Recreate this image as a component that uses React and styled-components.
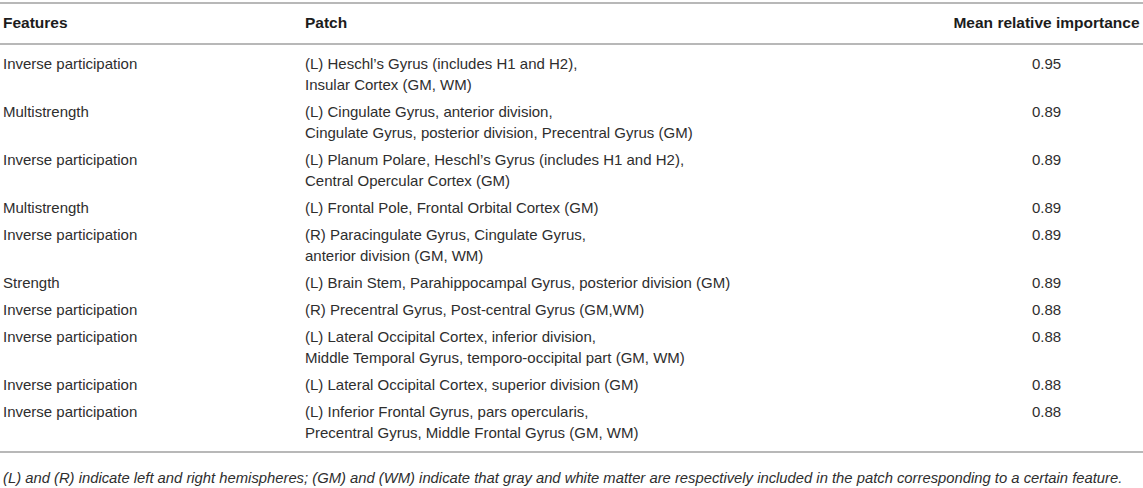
import React from 'react';
import styled, { createGlobalStyle } from 'styled-components';

const GlobalStyle = createGlobalStyle`
  html, body {
    margin: 0;
    padding: 0;
    background: #ffffff;
  }
  body {
    font-family: "Liberation Sans", Arial, Helvetica, sans-serif;
    color: #2e2e2e;
  }
`;

const Wrapper = styled.div`
  width: 1143px;
  padding-top: 2px;
`;

const Table = styled.table`
  width: 100%;
  border-collapse: collapse;
  border-top: 2px solid #b8b8b8;
  border-bottom: 2px solid #b8b8b8;
  font-size: 15px;
  line-height: 21px;
`;

const HeadCell = styled.th`
  font-size: 15.5px;
  font-weight: bold;
  color: #1c1c1c;
  text-align: ${(props) => props.align || 'left'};
  padding: 8px 0 10px ${(props) => props.pl || '3px'};
  border-bottom: 2px solid #b8b8b8;
  width: ${(props) => props.w || 'auto'};
  white-space: nowrap;
`;

const Row = styled.tr`
  &:first-child td {
    padding-top: 8px;
  }
  &:last-child td {
    padding-bottom: 8px;
  }
`;

const Cell = styled.td`
  vertical-align: top;
  text-align: ${(props) => props.align || 'left'};
  padding: 3px 0 3px ${(props) => props.pl || '3px'};
  white-space: nowrap;
`;

const Note = styled.p`
  margin: 16px 0 0 3px;
  font-size: 14.8px;
  font-style: italic;
  color: #2e2e2e;
  line-height: 18px;
  white-space: nowrap;
`;

const rows = [
  ['Inverse participation', ["(L) Heschl’s Gyrus (includes H1 and H2),", 'Insular Cortex (GM, WM)'], '0.95'],
  ['Multistrength', ['(L) Cingulate Gyrus, anterior division,', 'Cingulate Gyrus, posterior division, Precentral Gyrus (GM)'], '0.89'],
  ['Inverse participation', ["(L) Planum Polare, Heschl’s Gyrus (includes H1 and H2),", 'Central Opercular Cortex (GM)'], '0.89'],
  ['Multistrength', ['(L) Frontal Pole, Frontal Orbital Cortex (GM)'], '0.89'],
  ['Inverse participation', ['(R) Paracingulate Gyrus, Cingulate Gyrus,', 'anterior division (GM, WM)'], '0.89'],
  ['Strength', ['(L) Brain Stem, Parahippocampal Gyrus, posterior division (GM)'], '0.89'],
  ['Inverse participation', ['(R) Precentral Gyrus, Post-central Gyrus (GM,WM)'], '0.88'],
  ['Inverse participation', ['(L) Lateral Occipital Cortex, inferior division,', 'Middle Temporal Gyrus, temporo-occipital part (GM, WM)'], '0.88'],
  ['Inverse participation', ['(L) Lateral Occipital Cortex, superior division (GM)'], '0.88'],
  ['Inverse participation', ['(L) Inferior Frontal Gyrus, pars opercularis,', 'Precentral Gyrus, Middle Frontal Gyrus (GM, WM)'], '0.88'],
];

function App() {
  return (
    <Wrapper>
      <GlobalStyle />
      <Table>
        <thead>
          <tr>
            <HeadCell w="302px">Features</HeadCell>
            <HeadCell pl="0">Patch</HeadCell>
            <HeadCell w="193px" align="center" pl="0">
              Mean relative importance
            </HeadCell>
          </tr>
        </thead>
        <tbody>
          {rows.map(([feature, patch, value], i) => (
            <Row key={i}>
              <Cell>{feature}</Cell>
              <Cell pl="0">
                {patch.map((line, j) => (
                  <div key={j}>{line}</div>
                ))}
              </Cell>
              <Cell align="center" pl="0">
                {value}
              </Cell>
            </Row>
          ))}
        </tbody>
      </Table>
      <Note>
        (L) and (R) indicate left and right hemispheres; (GM) and (WM) indicate that gray and white matter are
        respectively included in the patch corresponding to a certain feature.
      </Note>
    </Wrapper>
  );
}

export default App;
